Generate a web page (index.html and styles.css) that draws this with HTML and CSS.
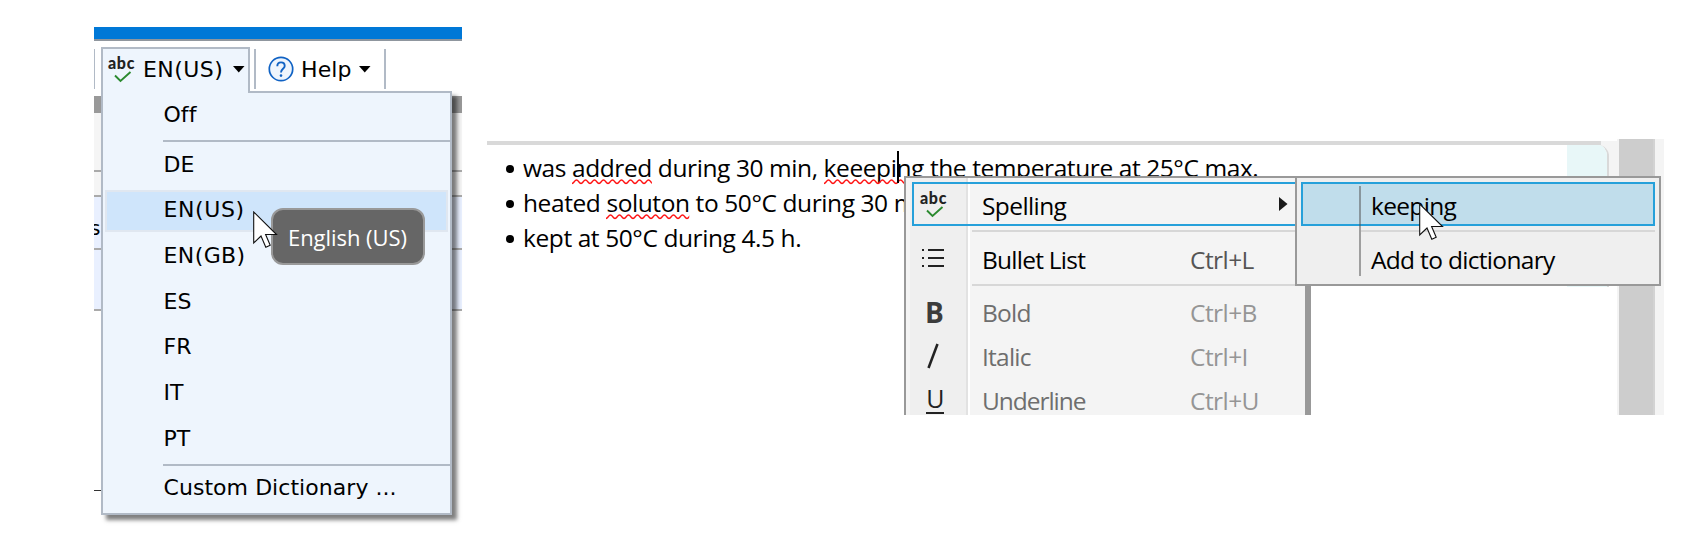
FILE: index.html
```html
<!DOCTYPE html>
<html lang="en">
<head>
<meta charset="utf-8">
<title>Spelling</title>
<link rel="stylesheet" href="styles.css">
</head>
<body>
<svg class="defs" width="0" height="0">
  <defs>
    <pattern id="wave" width="9" height="6" patternUnits="userSpaceOnUse">
      <path d="M-1 3.9 L0 4.5 C2 4.5 2.5 1 4.5 1 S7 4.5 9 4.5 L10 4.2" fill="none" stroke="#f11" stroke-width="1.3"/>
    </pattern>
    <symbol id="pointer" viewBox="0 0 25 38">
      <path d="M.7 1V32L8 25l4.8 11.2 4.4-1.9L12.600 23.500H23.500Z" fill="#fff" stroke="#111" stroke-width="1.1"/>
    </symbol>
    <symbol id="tick" viewBox="0 0 18 12">
      <path d="M1 4.500L6.500 10L16.500 1" fill="none" stroke="#2b8a2f" stroke-width="1.9"/>
    </symbol>
  </defs>
</svg>
<main class="stage">
  <section class="app">
    <div class="titlebar"></div>
    <div class="toolbar">
      <div class="divider"></div>
      <div class="lang-button">
        <span class="abc"><b>abc</b><svg width="18" height="12"><use href="#tick"/></svg></span>
        <span class="lang-label">EN(US)</span>
        <svg class="caret" width="12" height="7"><path d="M0 0H11.500L5.750 6.500Z"/></svg>
      </div>
      <div class="help-button">
        <svg width="26" height="26" viewBox="0 0 26 26" fill="none" stroke="#1062c4">
          <circle cx="13" cy="13" r="11.700" fill="#eef5fd" stroke-width="1.700"/>
          <path d="M9.300 10.200C9.300 7.800 10.900 6.400 13 6.400S16.700 7.800 16.700 9.900C16.700 12.800 13 12.900 13 16.400" stroke-width="1.900"/>
          <circle cx="13" cy="19.600" r="1.300" fill="#1062c4" stroke="none"/>
        </svg>
        <span class="help-label">Help</span>
        <svg class="caret" width="12" height="7"><path d="M0 0H11.500L5.750 6.500Z"/></svg>
      </div>
    </div>
    <div class="band"></div>
    <div class="sheet sheet-a"></div>
    <div class="sheet sheet-b"></div>
    <div class="sheet sheet-c">s</div>
    <div class="sheet sheet-d"></div>
    <div class="sheet sheet-e"></div>
    <div class="menu">
      <div class="row">Off</div>
      <div class="rule"></div>
      <div class="row">DE</div>
      <div class="row hot">EN(US)</div>
      <div class="row">EN(GB)</div>
      <div class="row">ES</div>
      <div class="row">FR</div>
      <div class="row">IT</div>
      <div class="row">PT</div>
      <div class="rule"></div>
      <div class="row">Custom Dictionary ...</div>
    </div>
    <div class="tooltip"><span>English (US)</span></div>
    <svg class="pointer p1" width="25" height="38"><use href="#pointer"/></svg>
  </section>

  <section class="editor">
    <div class="page">
      <div class="page-edge"></div>
      <div class="page-body">
        <div class="text">
          <p><i></i><span>was <u>addred<svg><rect width="100%" height="6" fill="url(#wave)"/></svg></u> during 30 min, <u>keeeping<svg><rect width="100%" height="6" fill="url(#wave)"/></svg></u> the temperature at 25°C max.</span></p>
          <p><i></i><span>heated <u>soluton<svg><rect width="100%" height="6" fill="url(#wave)"/></svg></u> to 50°C during 30 m</span></p>
          <p><i></i><span>kept at 50°C during 4.5 h.</span></p>
        </div>
        <div class="side"></div>
      </div>
    </div>
    <div class="scroll"><div class="thumb"></div></div>
    <div class="textcursor"></div>
    <div class="context">
      <div class="item first"><span class="ico"><span class="abc"><b>abc</b><svg width="18" height="12"><use href="#tick"/></svg></span></span><span class="name">Spelling</span><svg class="arrow" width="9" height="14"><path d="M0 0L8.500 7L0 14Z" fill="#1a1a1a"/></svg></div>
      <div class="line"></div>
      <div class="item bullet"><span class="ico"><svg width="22" height="19" fill="#222"><path d="M0 0H2V2H0ZM6 0H22V2H6ZM0 8H2V10H0ZM6 8H22V10H6ZM0 16H2V18H0ZM6 16H22V18H6Z"/></svg></span><span class="name">Bullet List</span><span class="key">Ctrl+L</span></div>
      <div class="line"></div>
      <div class="item off gap"><span class="ico bold">B</span><span class="name">Bold</span><span class="key">Ctrl+B</span></div>
      <div class="item off"><span class="ico"><svg width="12" height="26"><path d="M1.500 25L10.500 1" stroke="#222" stroke-width="2.600"/></svg></span><span class="name">Italic</span><span class="key">Ctrl+I</span></div>
      <div class="item off"><span class="ico under">U</span><span class="name tight">Underline</span><span class="key">Ctrl+U</span></div>
    </div>
    <div class="submenu">
      <div class="choice hot2">keeping</div>
      <div class="subline"></div>
      <div class="choice add">Add to dictionary</div>
      <div class="gutter"></div>
    </div>
    <svg class="pointer p2" width="25" height="38"><use href="#pointer"/></svg>
  </section>
</main>
</body>
</html>
```
FILE: styles.css
```css
* { box-sizing: border-box; }
body { margin: 0; background: #fff; color: #000; overflow: hidden; }
.defs { position: absolute; }
svg { display: block; flex: none; }
.stage { display: flex; width: 1683px; height: 547px; padding-left: 94px; }

/* language menu */
.app { position: relative; width: 368px; height: 520px; margin-top: 27px; font-family: "DejaVu Sans", Verdana, sans-serif; font-size: 22px; }
.titlebar { height: 14px; background: #0078d7; border-bottom: 2px solid #8f969e; }
.toolbar { display: flex; height: 55px; padding-top: 6px; }
.divider { width: 1px; height: 40px; margin-top: 2px; background: #b1bac6; }
.lang-button { position: relative; z-index: 2; display: flex; align-items: center; width: 149px; height: 46px; margin-left: 6px; padding: 0 3px 3px 5px; background: #eef5fd; border: 2px solid #b1bac6; border-bottom: 0; }
.lang-label { width: 84px; margin: -1px 0 0 8px; letter-spacing: .45px; white-space: nowrap; }
.caret { margin-left: 8px; }
.help-button { display: flex; align-items: center; width: 132px; height: 40px; margin: 2px 0 0 4px; padding-left: 12px; border: solid #b1bac6; border-width: 0 2px; }
.help-label { width: 50px; margin-left: 7px; letter-spacing: .1px; }
.help-button .caret { margin-left: 8px; }
.abc { display: flex; flex-direction: column; align-items: center; width: 27px; font: bold 16px/16px Lato, sans-serif; letter-spacing: .7px; color: #222; }
.abc b { display: block; height: 16px; }
.abc svg { margin-left: 2px; }
.lang-button .abc { margin-top: -2px; }
.band { height: 17px; background: #999; }
.sheet { background: #f5f5f5; border-bottom: 2px solid #aaa; }
.sheet-a { height: 59px; }
.sheet-b { height: 25px; }
.sheet-c { height: 53px; padding-top: 19px; background: #e9f0ff; line-height: 24px; font-size: 20px; text-indent: -4px; overflow: hidden; }
.sheet-d { height: 61px; background: #e9f0ff; }
.sheet-e { width: 8px; height: 180px; background: #fff; border-color: #333; border-bottom-width: 1px; }
.menu { position: absolute; z-index: 1; left: 7px; top: 64px; width: 351px; height: 424px; background: #eef5fd; border: 2px solid #b1bac6; box-shadow: 5px 5px 4px rgba(0,0,0,.5); }
.row { display: flex; align-items: center; height: 45.7px; padding: 0 0 3px 60.5px; white-space: nowrap; letter-spacing: .05px; }
.rule { height: 4px; margin: 1px 0 -1px 60px; border-top: 2px solid #b1bac6; }
.row.hot { height: 41.700px; margin: 2px; padding-left: 56.5px; padding-bottom: 3px; background: #cfe5fb; border: 2px solid #e0e7f0; letter-spacing: .6px; }
.row.hot + .row { letter-spacing: .4px; }
.tooltip { position: absolute; z-index: 3; left: 177px; top: 181px; width: 154px; height: 57px; padding: 12px 0 0 15px; background: #666; border: 2px solid #999; border-radius: 12px; color: #fff; font: 22px/30px "Open Sans", sans-serif; letter-spacing: -.05px; white-space: nowrap; }
.pointer { position: absolute; z-index: 5; overflow: visible; }
.p1 { left: 159px; top: 184px; }
.p2 { left: 932px; top: 64px; }

/* editor with context menu */
.editor { position: relative; display: flex; width: 1177px; height: 276px; margin: 139px 0 0 25px; overflow: hidden; background: #f4f4f4; font: 24.500px/35px "Open Sans", sans-serif; }
.page { width: 1130px; background: linear-gradient(#fff 0 2px, transparent 2px 147px, #fff 147px); }
.page-edge { width: 1114px; height: 4px; margin-top: 2px; background: #d9d9d9; }
.page-body { display: flex; justify-content: space-between; width: 1122px; height: 142px; background: #fff; border-right: 2px solid #d9d9d9; border-radius: 0 11px 0 0; overflow: hidden; }
.side { width: 40px; background: #e8f7f8; }
.text { padding: 5px 0 0 19px; letter-spacing: -.41px; }
.text p { display: flex; align-items: center; height: 35px; margin: 0; white-space: nowrap; }
.text i { width: 8px; height: 8px; margin: 2px 9px 0 0; border-radius: 50%; background: #000; }
.text u { position: relative; text-decoration: none; }
.text u svg { position: absolute; left: 0; top: 28px; width: 100%; height: 6px; }
.scroll { width: 47px; padding-left: 2px; }
.thumb { width: 36px; height: 276px; background: #cdcdcd; border-right: 2px solid #d3d3d3; }
.textcursor { position: absolute; left: 410px; top: 12px; width: 2px; height: 32px; background: #000; }
.context { position: absolute; left: 417px; top: 37px; width: 407px; height: 260px; padding: 4px 0 0 4px; border: solid #999; border-width: 2px 6px 0 2px; background: linear-gradient(90deg, #f4f4f4 0 4px, #efefef 4px 60px, #e2e2e2 60px 62px, #fff 62px 64px, #f4f4f4 64px); letter-spacing: -.75px; }
.item { display: flex; align-items: center; height: 44px; }
.ico { display: flex; justify-content: center; width: 58px; padding-right: 12px; }
.name { width: 208px; margin: 2px 0 0 14px; white-space: nowrap; }
.name.tight { letter-spacing: -1.050px; }
.key { margin-top: 2px; color: #555; letter-spacing: -.550px; }
.off .name, .off .key { margin-top: 2px; line-height: 28px; }
.off .name { color: #6e6e6e; }
.off .key { color: #959595; }
.first { margin-left: 2px; border: 2px solid #26a0da; }
.first .name { letter-spacing: -.600px; }
.first .ico { width: 54px; padding-right: 15px; }
.first .arrow { margin-left: 89px; }
.line { height: 2px; margin: 4px 0 0 62px; background: #d7d7d7; }
.bullet { height: 48px; padding-top: 4px; }
.gap { margin-top: 4px; }
.context .bold { padding-right: 10px; font-size: 28px; font-weight: 700; color: #3c3c3c; }
.context .under { height: 26px; width: 18px; margin: 2px 24px 0 16px; padding: 0; border-bottom: 2px solid #222; font-size: 25px; line-height: 20px; color: #222; }
.submenu { position: absolute; z-index: 3; left: 808px; top: 37px; width: 366px; height: 110px; padding: 4px; border: 2px solid #999; background: #efefef; }
.choice { display: flex; align-items: center; height: 44px; padding: 2px 0 0 70px; white-space: nowrap; letter-spacing: -.68px; }
.hot2 { padding-left: 68px; background: #c0ddeb; border: 2px solid #26a0da; }
.subline { height: 2px; margin: 4px 0 4px 60px; background: #d7d7d7; }
.gutter { position: absolute; left: 62px; top: 8px; width: 2px; height: 90px; background: rgba(80,80,80,.5); }
```
